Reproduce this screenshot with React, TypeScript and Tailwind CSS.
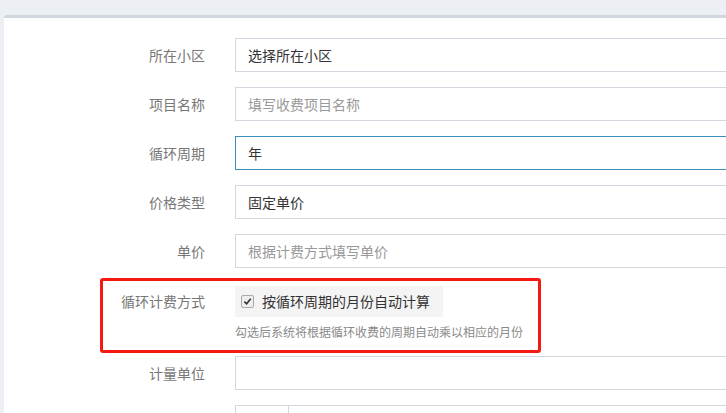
import React from 'react';

const font = { fontFamily: '"Noto Sans CJK SC", "Liberation Sans", sans-serif' };

interface RowProps {
    label: string;
    children: React.ReactNode;
}

function Row({ label, children }: RowProps) {
    return (
        <div className="flex items-start mb-[15px]">
            <label className="w-[201px] shrink-0 text-right text-[14px] leading-[20px] pt-[7px] text-[#777]">
                {label}
            </label>
            <div className="ml-[30px] flex-1">{children}</div>
        </div>
    );
}

function Input({ value, placeholder, focused }: { value?: string; placeholder?: string; focused?: boolean }) {
    return (
        <div
            className={`h-[34px] w-[560px] border px-[12px] flex items-center text-[14px] bg-white ${
                focused ? 'border-[#3c8dbc]' : 'border-[#d2d6de]'
            }`}
        >
            {value ? (
                <span className="text-[#333]">{value}</span>
            ) : (
                <span className="text-[#999]">{placeholder}</span>
            )}
        </div>
    );
}

export default function App() {
    return (
        <div className="w-[726px] h-[413px] overflow-hidden bg-[#ecf0f5] pt-[15px] pl-[4px]" style={font}>
            <div className="relative bg-white border-t-[3px] border-[#d2d6de] rounded-tl-[3px] shadow-[0_1px_1px_rgba(0,0,0,0.1)] w-[760px] pt-[20px] min-h-[420px]">
                <Row label="所在小区">
                    <Input value="选择所在小区" />
                </Row>
                <Row label="项目名称">
                    <Input placeholder="填写收费项目名称" />
                </Row>
                <Row label="循环周期">
                    <Input value="年" focused />
                </Row>
                <Row label="价格类型">
                    <Input value="固定单价" />
                </Row>
                <Row label="单价">
                    <Input placeholder="根据计费方式填写单价" />
                </Row>

                <div className="flex items-start mb-[15px]">
                    <label className="w-[201px] shrink-0 text-right text-[14px] leading-[20px] pt-[8px] text-[#777]">
                        循环计费方式
                    </label>
                    <div className="ml-[30px] flex-1 pt-[3px]">
                        <div className="inline-flex items-center h-[31px] w-[208px] bg-[#f4f4f4] pl-[6px]">
                            <span className="w-[13px] h-[13px] rounded-[2px] border border-[#aaa] bg-[#eee] flex items-center justify-center">
                                <svg width="9" height="9" viewBox="0 0 10 10">
                                    <path d="M1.5 5.2 L4 7.6 L8.6 2" fill="none" stroke="#333" strokeWidth="1.8" />
                                </svg>
                            </span>
                            <span className="ml-[8px] text-[14px] text-[#333]">按循环周期的月份自动计算</span>
                        </div>
                        <p className="mt-[6px] text-[12px] leading-[18px] text-[#8a8a8a]">
                            勾选后系统将根据循环收费的周期自动乘以相应的月份
                        </p>
                    </div>
                </div>

                <Row label="计量单位">
                    <Input />
                </Row>
                <Row label="">
                    <div className="flex h-[34px] w-[560px]">
                        <div className="w-[54px] border border-[#d2d6de] bg-white" />
                        <div className="flex-1 border border-l-0 border-[#d2d6de] bg-white" />
                    </div>
                </Row>

                <div className="absolute left-[96px] top-[260px] w-[441px] h-[75px] border-[3px] border-[#f41a12] rounded-[3px] pointer-events-none" />
            </div>
        </div>
    );
}
